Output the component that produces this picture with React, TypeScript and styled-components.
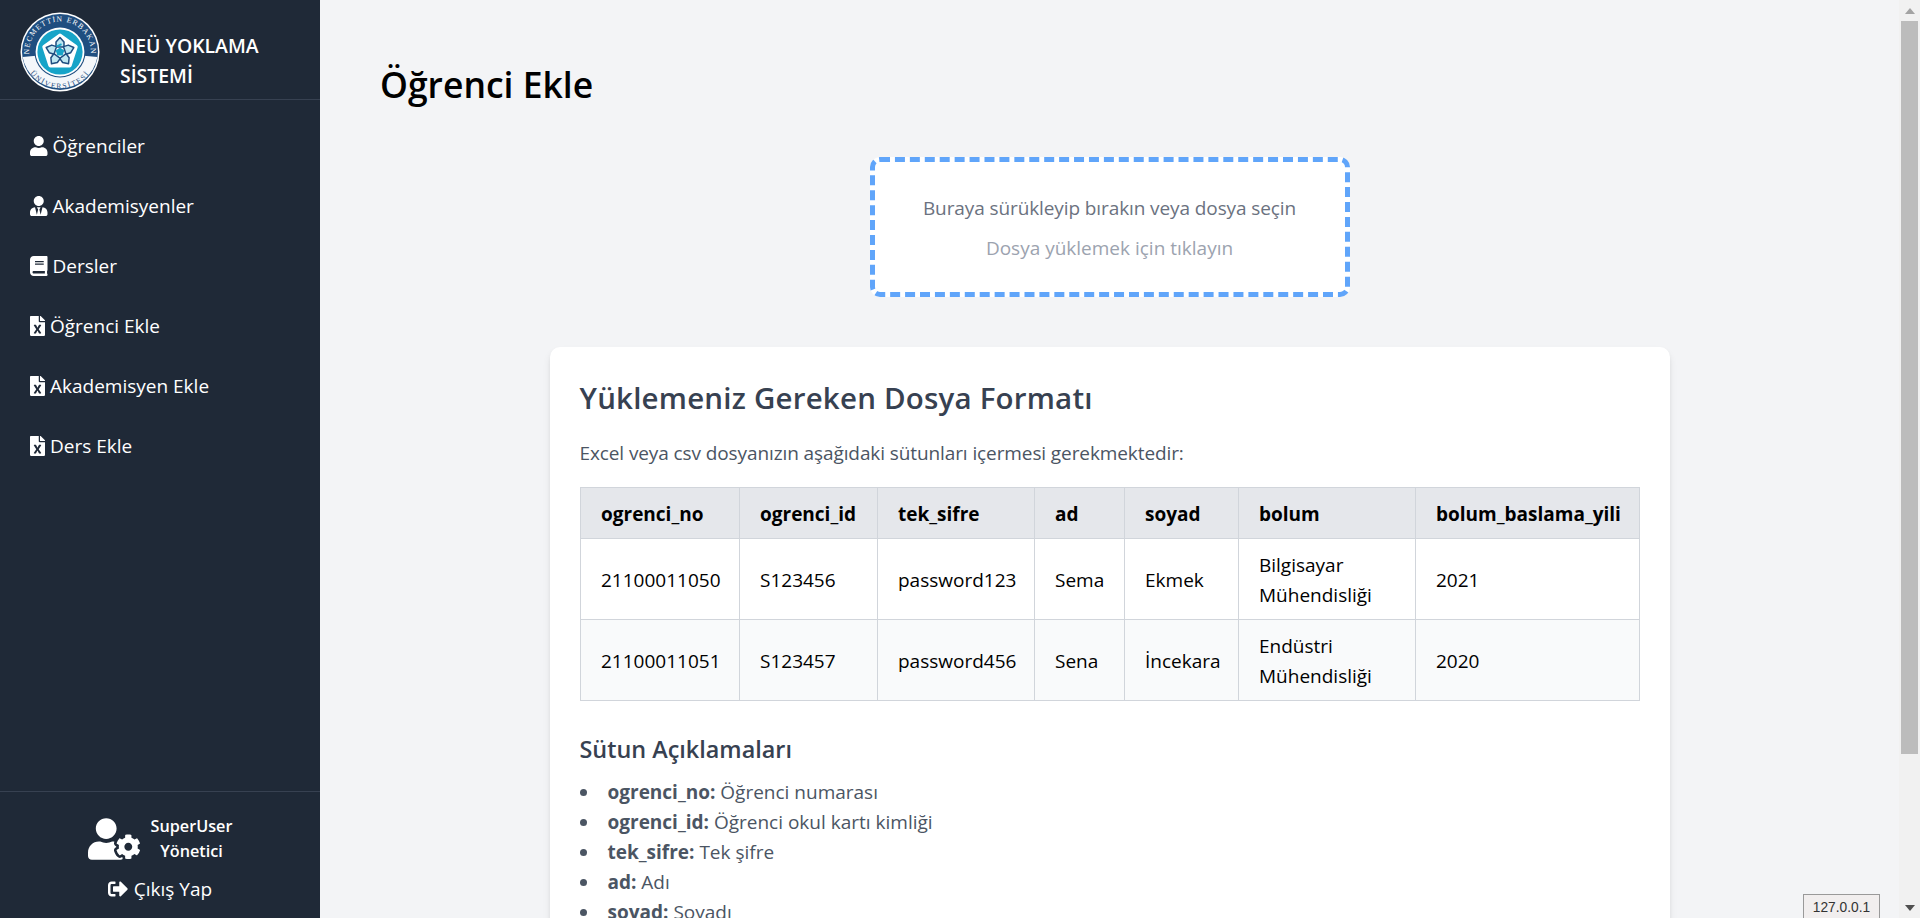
import styled, { createGlobalStyle } from 'styled-components';
import { FaBook, FaFileExcel, FaSignOutAlt, FaUser, FaUserCog, FaUserTie } from 'react-icons/fa';

const navItems = [
	{ label: 'Öğrenciler', Icon: FaUser, iconWidth: 17.5 },
	{ label: 'Akademisyenler', Icon: FaUserTie, iconWidth: 17.5 },
	{ label: 'Dersler', Icon: FaBook, iconWidth: 17.5 },
	{ label: 'Öğrenci Ekle', Icon: FaFileExcel, iconWidth: 15 },
	{ label: 'Akademisyen Ekle', Icon: FaFileExcel, iconWidth: 15 },
	{ label: 'Ders Ekle', Icon: FaFileExcel, iconWidth: 15 },
];

const columns = [
	{ name: 'ogrenci_no', width: 159 },
	{ name: 'ogrenci_id', width: 138 },
	{ name: 'tek_sifre', width: 157 },
	{ name: 'ad', width: 90 },
	{ name: 'soyad', width: 114 },
	{ name: 'bolum', width: 177 },
	{ name: 'bolum_baslama_yili', width: 224 },
];

const rows = [
	['21100011050', 'S123456', 'password123', 'Sema', 'Ekmek', 'Bilgisayar Mühendisliği', '2021'],
	['21100011051', 'S123457', 'password456', 'Sena', 'İncekara', 'Endüstri Mühendisliği', '2020'],
];

const descriptions = [
	['ogrenci_no', 'Öğrenci numarası'],
	['ogrenci_id', 'Öğrenci okul kartı kimliği'],
	['tek_sifre', 'Tek şifre'],
	['ad', 'Adı'],
	['soyad', 'Soyadı'],
];

const Logo = () => (
	<LogoSvg viewBox="0 0 80 80">
		<defs>
			<path id="logo-top" d="M 9.5 46 A 31 31 0 1 1 70.5 46" />
			<path id="logo-bottom" d="M 4.5 50 A 37 37 0 0 0 75.5 50" />
		</defs>
		<circle cx="40" cy="40" r="39.5" fill="#fff" />
		<circle cx="40" cy="40" r="38" fill="#1f4e80" />
		<path d="M 2.6 45 A 38 38 0 0 0 77.4 45 Q 40 40 2.6 45 Z" fill="#f4f7fa" />
		<circle cx="40" cy="40" r="25.5" fill="#1f4e80" />
		<circle cx="40" cy="40" r="24.4" fill="#fff" />
		<circle cx="40" cy="40" r="22.6" fill="#17a4c8" />
		<text fontFamily="Liberation Serif, serif" fontSize="7.6" letterSpacing="1.1" fill="#fff">
			<textPath href="#logo-top" startOffset="50%" textAnchor="middle">
				NECMETTİN ERBAKAN
			</textPath>
		</text>
		<text fontFamily="Liberation Serif, serif" fontSize="7.6" letterSpacing="1.5" fill="#1f4e80">
			<textPath href="#logo-bottom" startOffset="50%" textAnchor="middle">
				ÜNİVERSİTESİ
			</textPath>
		</text>
		<path
			d="M40 23.5 L55.7 34.9 L49.7 53.4 L30.3 53.4 L24.3 34.9 Z"
			fill="#fff"
			stroke="#fff"
			strokeWidth="4"
			strokeLinejoin="round"
		/>
		{[0, 72, 144, 216, 288].map((angle) => (
			<g key={angle} transform={`rotate(${angle} 40 40)`}>
				<path d="M36 30 L40 25.5 L44 30 L44 35 L36 35 Z" fill="#bfe6f1" stroke="#1f4e80" strokeWidth="1.5" strokeLinejoin="round" />
				<path d="M44 35 L48 39" stroke="#17a4c8" strokeWidth="1.8" />
			</g>
		))}
		<path d="M40 35.5 L44.3 38.6 L42.6 43.6 L37.4 43.6 L35.7 38.6 Z" fill="#17a4c8" />
	</LogoSvg>
);

const ScrollBar = () => (
	<ScrollTrack>
		<ScrollButton>
			<svg width="10" height="6" viewBox="0 0 10 6">
				<path d="M5 0 L10 6 L0 6 Z" fill="#a3a3a3" />
			</svg>
		</ScrollButton>
		<ScrollThumb />
		<ScrollSpace />
		<ScrollButton>
			<svg width="10" height="6" viewBox="0 0 10 6">
				<path d="M0 0 L10 0 L5 6 Z" fill="#505050" />
			</svg>
		</ScrollButton>
	</ScrollTrack>
);

export default function App() {
	return (
		<Shell>
			<GlobalStyle />
			<Sidebar>
				<Brand>
					<Logo />
					<BrandName>NEÜ YOKLAMA SİSTEMİ</BrandName>
				</Brand>
				<Nav>
					{navItems.map(({ label, Icon, iconWidth }) => (
						<NavLink key={label} $iconWidth={iconWidth}>
							<Icon />
							{label}
						</NavLink>
					))}
				</Nav>
				<SidebarFooter>
					<UserRow>
						<FaUserCog size={52} />
						<UserText>
							SuperUser
							<br />
							Yönetici
						</UserText>
					</UserRow>
					<Logout>
						<FaSignOutAlt size={20} />
						Çıkış Yap
					</Logout>
				</SidebarFooter>
			</Sidebar>
			<Main>
				<Title>Öğrenci Ekle</Title>
				<DropZone>
					<DropText>Buraya sürükleyip bırakın veya dosya seçin</DropText>
					<DropHint>Dosya yüklemek için tıklayın</DropHint>
				</DropZone>
				<Card>
					<CardTitle>Yüklemeniz Gereken Dosya Formatı</CardTitle>
					<Lead>Excel veya csv dosyanızın aşağıdaki sütunları içermesi gerekmektedir:</Lead>
					<FormatTable>
						<colgroup>
							{columns.map((column) => (
								<col key={column.name} width={column.width} />
							))}
						</colgroup>
						<thead>
							<tr>
								{columns.map((column) => (
									<HeadCell key={column.name}>{column.name}</HeadCell>
								))}
							</tr>
						</thead>
						<tbody>
							{rows.map((row) => (
								<BodyRow key={row[0]}>
									{row.map((value) => (
										<BodyCell key={value}>{value}</BodyCell>
									))}
								</BodyRow>
							))}
						</tbody>
					</FormatTable>
					<SubTitle>Sütun Açıklamaları</SubTitle>
					<DescriptionList>
						{descriptions.map(([name, text]) => (
							<li key={name}>
								<strong>{name}:</strong> {text}
							</li>
						))}
					</DescriptionList>
				</Card>
			</Main>
			<ScrollBar />
			<IpTag>127.0.0.1</IpTag>
		</Shell>
	);
}

const GlobalStyle = createGlobalStyle`
	html, body {
		margin: 0;
		height: 100%;
		overflow: hidden;
	}
	body {
		font-family: 'Open Sans', 'Noto Sans', sans-serif;
		font-size: 19px;
		line-height: 30px;
	}
`;

const Shell = styled.div`
	display: flex;
	height: 100vh;
	overflow: hidden;
	position: relative;
	background: #f3f4f6;
`;

const Sidebar = styled.aside`
	flex: 0 0 320px;
	display: flex;
	flex-direction: column;
	background: #1f2937;
	color: #fff;
`;

const Brand = styled.div`
	display: flex;
	align-items: flex-start;
	gap: 20px;
	height: 100px;
	padding: 12px 20px 0;
	box-sizing: border-box;
	border-bottom: 1px solid #374151;
`;

const LogoSvg = styled.svg`
	flex: 0 0 80px;
	width: 80px;
	height: 80px;
`;

const BrandName = styled.div`
	width: 175px;
	padding-top: 19px;
	font-size: 19.4px;
	font-weight: 600;
`;

const Nav = styled.nav`
	flex: 1;
	padding-top: 16px;
`;

const NavLink = styled.a<{ $iconWidth: number }>`
	display: flex;
	align-items: center;
	gap: 5px;
	height: 60px;
	padding-left: 30px;

	svg {
		flex: 0 0 ${({ $iconWidth }) => $iconWidth}px;
		width: ${({ $iconWidth }) => $iconWidth}px;
		height: 20px;
	}
`;

const SidebarFooter = styled.div`
	display: flex;
	flex-direction: column;
	align-items: center;
	height: 127px;
	padding-top: 21px;
	box-sizing: border-box;
	border-top: 1px solid #374151;
`;

const UserRow = styled.div`
	display: flex;
	align-items: center;
	gap: 11px;
`;

const UserText = styled.div`
	font-size: 16.2px;
	font-weight: 600;
	line-height: 25px;
	text-align: center;
`;

const Logout = styled.a`
	display: flex;
	align-items: center;
	gap: 6px;
	margin-top: 9px;
`;

const Main = styled.main`
	flex: 1;
	min-width: 0;
	padding: 60px 60px 0;
`;

const Title = styled.h1`
	margin: 2px 0 50px;
	font-size: 35.5px;
	font-weight: 600;
	line-height: 45px;
	color: #000;
`;

const DropZone = styled.div`
	width: 480px;
	height: 140px;
	margin: 0 auto 50px;
	padding-top: 31px;
	box-sizing: border-box;
	background: #fff;
	border: 5px dashed #60a5fa;
	border-radius: 10px;
	text-align: center;
`;

const DropText = styled.p`
	margin: 0 0 10px;
	color: #6b7280;
	letter-spacing: -0.1px;
`;

const DropHint = styled.p`
	margin: 0;
	color: #9ca3af;
`;

const Card = styled.section`
	max-width: 1120px;
	margin: 0 auto;
	padding: 30px;
	box-sizing: border-box;
	background: #fff;
	border-radius: 10px;
	box-shadow: 0 5px 8px -1px rgba(0, 0, 0, 0.1), 0 2px 5px -2px rgba(0, 0, 0, 0.1);
`;

const CardTitle = styled.h2`
	margin: 0 0 20px;
	padding-top: 1px;
	font-size: 29.5px;
	font-weight: 600;
	line-height: 40px;
	letter-spacing: 0.2px;
	color: #374151;
`;

const Lead = styled.p`
	margin: 0 0 19px;
	color: #4b5563;
	letter-spacing: -0.1px;
`;

const FormatTable = styled.table`
	width: 1059px;
	table-layout: fixed;
	border-collapse: collapse;
	color: #000;
`;

const HeadCell = styled.th`
	padding: 11px 20px 9px 20.5px;
	background: #e5e7eb;
	border: 1px solid #d1d5db;
	font-weight: 700;
	text-align: left;
	white-space: nowrap;
`;

const BodyRow = styled.tr`
	&:nth-child(even) {
		background: #f9fafb;
	}
`;

const BodyCell = styled.td`
	padding: 11px 20px 9px 20.5px;
	border: 1px solid #d1d5db;
`;

const SubTitle = styled.h3`
	margin: 31px 0 10px;
	font-size: 23.4px;
	font-weight: 600;
	line-height: 35px;
	color: #374151;
`;

const DescriptionList = styled.ul`
	margin: 0;
	padding-left: 28px;
	list-style: none;
	color: #4b5563;

	li::before {
		content: '';
		display: inline-block;
		width: 7px;
		height: 7px;
		margin: 0 21px 0 -28px;
		border-radius: 50%;
		background: #4b5563;
		vertical-align: 3px;
	}
`;

const ScrollTrack = styled.div`
	flex: 0 0 21px;
	display: flex;
	flex-direction: column;
	align-items: center;
	background: #f1f1f1;
`;

const ScrollButton = styled.div`
	flex: 0 0 21px;
	display: flex;
	align-items: center;
	justify-content: center;
`;

const ScrollThumb = styled.div`
	flex: 0 0 733px;
	width: 17px;
	background: #bcbcbc;
`;

const ScrollSpace = styled.div`
	flex: 1;
`;

const IpTag = styled.div`
	position: absolute;
	right: 40px;
	bottom: -6px;
	width: 77px;
	height: 30px;
	box-sizing: border-box;
	border: 1px solid #999;
	background: #f1eeee;
	color: #333;
	font-family: 'Liberation Sans', Arial, sans-serif;
	font-size: 13.75px;
	line-height: 26px;
	text-align: center;
`;
